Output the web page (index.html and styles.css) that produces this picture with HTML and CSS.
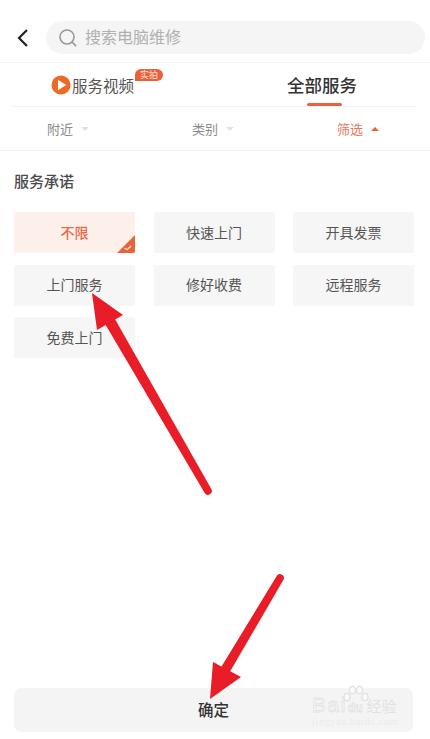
FILE: index.html
```html
<!DOCTYPE html>
<html lang="zh">
<head>
  <meta charset="UTF-8" />
  <meta name="viewport" content="width=device-width, initial-scale=1.0"/>
  <title>搜索电脑维修</title>
  <link rel="stylesheet" href="styles.css">
</head>
<body>
  <div class="page">
    <header class="top">
      <svg class="back" width="14" height="20" viewBox="0 0 14 20"><path d="M11 2 3 10l8 8" fill="none" stroke="#222" stroke-width="2.2"/></svg>
      <div class="search">
        <svg width="20" height="20" viewBox="0 0 20 20"><circle cx="9" cy="9" r="7" fill="none" stroke="#999" stroke-width="1.6"/><path d="m14 14 3.6 3.6" stroke="#999" stroke-width="1.6" stroke-linecap="round"/></svg>
        <span>搜索电脑维修</span>
      </div>
    </header>

    <nav class="tabs">
      <div class="tab tab-video">
        <svg width="20" height="20" viewBox="0 0 20 20"><circle cx="10" cy="10" r="9.5" fill="#ee6a24"/><path d="M7 4.8 15.2 10 7 15.2z" fill="#fff"/></svg>
        <span>服务视频</span>
        <em class="badge">实拍</em>
      </div>
      <div class="tab tab-active">全部服务</div>
    </nav>

    <div class="filters">
      <div class="filter filter-near">附近<i class="caret"></i></div>
      <div class="filter filter-type">类别<i class="caret"></i></div>
      <div class="filter filter-on">筛选<i class="caret caret-up"></i></div>
    </div>

    <section class="panel">
      <h3>服务承诺</h3>
      <div class="chips">
        <div class="chip chip-on">不限
          <svg class="tick" width="18" height="18" viewBox="0 0 18 18"><path d="M18 0v16a2 2 0 0 1-2 2H0z" fill="#e9643a"/><path d="m7.5 13 2.6 1.6 4-3.6" fill="none" stroke="#fbd9c9" stroke-width="1.3"/></svg>
        </div>
        <div class="chip">快速上门</div>
        <div class="chip">开具发票</div>
        <div class="chip">上门服务</div>
        <div class="chip">修好收费</div>
        <div class="chip">远程服务</div>
        <div class="chip">免费上门</div>
      </div>
    </section>

    <footer class="bottom">
      <button class="confirm">确定</button>
    </footer>
  </div>

  <svg class="arrows" width="430" height="739" viewBox="0 0 430 739">
    <path d="M211.3 489.1A3.8 3.8 0 0 1 204.7 492.9L103.2 320.8 112.8 315.3z" fill="#e91d27"/>
    <path d="M92 293 123 315 97 330z" fill="#e91d27"/>
    <path d="M283.3 580A3.8 3.8 0 0 0 276.7 576L219.7 669.4 228.3 674.6z" fill="#e91d27"/>
    <path d="M210 699 213 662 241 677z" fill="#e91d27"/>
  </svg>

  <div class="mark">
    <svg class="paw" width="28" height="20" viewBox="0 0 28 20"><g fill="#fafafa" stroke="#e2e2e2" stroke-width="1.4"><ellipse cx="5" cy="12" rx="3" ry="3.6"/><ellipse cx="10.5" cy="5" rx="3" ry="3.8"/><ellipse cx="17.5" cy="5" rx="3" ry="3.8"/><ellipse cx="23" cy="12" rx="3" ry="3.6"/></g></svg>
    <div class="mark-logo">Bai<b>du</b><span>经验</span></div>
    <div class="mark-url">jingyan.baidu.com</div>
  </div>
</body>
</html>
```

FILE: styles.css
```css
* {
  box-sizing: border-box;
}
html, body {
  margin: 0;
  padding: 0;
  background: #fff;
}
body {
  position: relative;
  width: 430px;
  height: 739px;
  overflow: hidden;
  font-family: "Noto Sans CJK SC", "Liberation Sans", sans-serif;
  color: #444;
}
.page {
  display: flex;
  flex-direction: column;
  height: 739px;
}
.top {
  display: flex;
  align-items: center;
  height: 63px;
  padding: 21px 5px 8px 16px;
  border-bottom: 1px solid #f4f4f4;
}
.back {
  flex: none;
  margin-right: 16px;
}
.search {
  flex: 1;
  display: flex;
  align-items: center;
  gap: 7px;
  height: 33px;
  padding-left: 12px;
  border-radius: 17px;
  background: #f5f5f5;
  color: #b0b0b0;
  font-size: 16px;
  line-height: 31px;
}
.search span {
  margin-top: -2px;
}
.tabs {
  display: flex;
  height: 44px;
  margin: 0 13px 0 13px;
  border-bottom: 1px solid #f2f2f2;
}
.tab {
  display: flex;
  align-items: center;
}
.tab-video {
  position: relative;
  width: 200px;
  padding-left: 38px;
  gap: 1px;
  font-size: 15.5px;
  color: #555;
}
.badge {
  position: absolute;
  left: 122px;
  top: 6px;
  width: 28px;
  height: 12px;
  border-radius: 6px 6px 6px 0;
  background: #ea6038;
  color: #fde5da;
  font-size: 9px;
  font-style: normal;
  line-height: 12px;
  text-align: center;
}
.tab-active {
  position: relative;
  margin-left: 74px;
  font-size: 17.5px;
  font-weight: 500;
  color: #333;
}
.tab-active::after {
  content: "";
  position: absolute;
  left: 20px;
  bottom: 0;
  width: 35px;
  height: 3px;
  border-radius: 2px;
  background: #e9623e;
}
.filters {
  display: flex;
  height: 44px;
  align-items: center;
  border-bottom: 1px solid #f2f2f2;
  font-size: 13px;
  color: #8a8a8a;
}
.filter {
  display: flex;
  align-items: center;
  gap: 8px;
}
.filter-near {
  margin-left: 47px;
}
.filter-type {
  margin-left: 103px;
}
.filter-on {
  margin-left: 103px;
  color: #e9765a;
}
.caret {
  width: 0;
  height: 0;
  border-left: 4.5px solid transparent;
  border-right: 4.5px solid transparent;
  border-top: 4.5px solid #e2e2e2;
}
.caret-up {
  border-top: 0;
  border-bottom: 4.5px solid #e9623e;
}
.panel {
  flex: 1;
  padding: 19px 16px 0 14px;
}
.panel h3 {
  margin: 0 0 20px;
  font-size: 15px;
  line-height: 22px;
  font-weight: 500;
  color: #4a4a4a;
}
.chips {
  display: grid;
  grid-template-columns: repeat(3, 121px);
  grid-auto-rows: 41px;
  column-gap: 18.5px;
  row-gap: 11.5px;
}
.chip {
  position: relative;
  display: flex;
  align-items: center;
  justify-content: center;
  padding-bottom: 2px;
  border-radius: 2px;
  background: #f6f6f6;
  font-size: 14px;
  color: #555;
}
.chip-on {
  background: #fdf0ea;
  color: #e9694a;
  font-weight: 500;
}
.tick {
  position: absolute;
  right: 0;
  bottom: 0;
}
.bottom {
  padding: 0 17px 7px 14px;
}
.confirm {
  display: block;
  width: 100%;
  height: 44px;
  padding-bottom: 3px;
  border: 0;
  border-radius: 7px;
  background: #f4f4f4;
  font-family: inherit;
  font-size: 15.5px;
  font-weight: 500;
  color: #333;
}
.arrows {
  position: absolute;
  left: 0;
  top: 0;
}
.mark {
  position: absolute;
  left: 312px;
  top: 684px;
  width: 92px;
  color: #fafafa;
}
.paw {
  position: absolute;
  left: 30px;
  top: 1px;
}
.mark-logo {
  position: absolute;
  left: 0;
  top: 8px;
  white-space: nowrap;
  font-family: "Liberation Sans", sans-serif;
  font-size: 21px;
  line-height: 26px;
  letter-spacing: 1.5px;
  -webkit-text-stroke: 0.8px #e2e2e2;
}
.mark-logo b {
  margin-left: 1px;
  font-size: 12px;
  letter-spacing: 0;
}
.mark-logo span {
  margin-left: 4px;
  font-family: "Noto Sans CJK SC", sans-serif;
  font-size: 15px;
  letter-spacing: 0;
  -webkit-text-stroke: 0;
  color: #e2e2e2;
}
.mark-url {
  position: absolute;
  left: 0;
  top: 32px;
  white-space: nowrap;
  font-family: "Liberation Serif", serif;
  font-size: 10px;
  letter-spacing: 0.7px;
  color: #ebebeb;
}
```
